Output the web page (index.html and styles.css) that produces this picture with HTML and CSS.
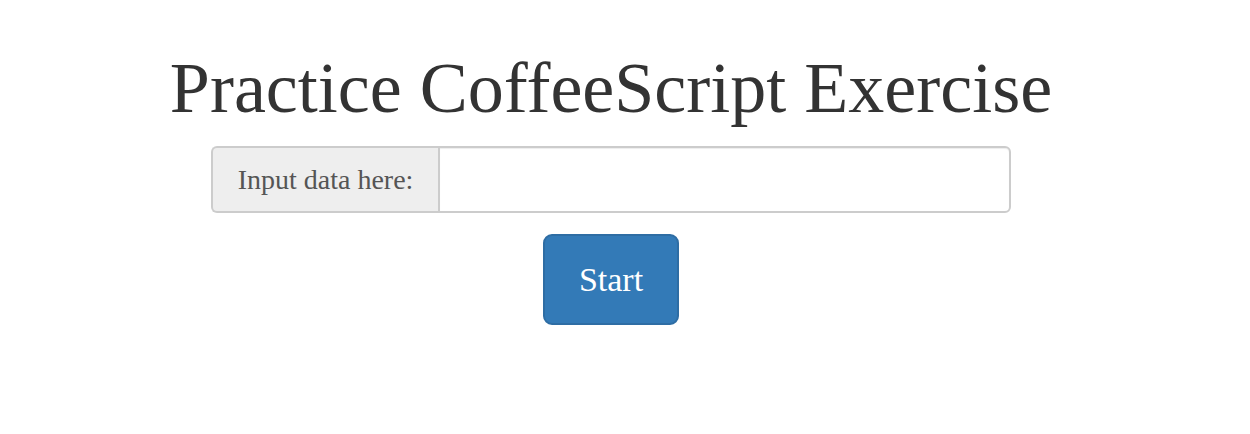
FILE: index.html
```html
<!DOCTYPE html>
<html>
<head>
<meta charset="utf-8">
<link rel="stylesheet" href="styles.css">
</head>
<body>
<div class="page">
  <h1 class="title">Practice CoffeeScript Exercise</h1>
  <div class="input-group">
    <span class="addon">Input data here:</span>
    <input class="field" type="text">
  </div>
  <button class="btn">Start</button>
</div>
</body>
</html>
```
FILE: styles.css
```css
html, body { margin: 0; padding: 0; background: #fff; }
body { font-family: "Liberation Serif", "Times New Roman", serif; color: #333; }
.page {
  width: 1222px;
  display: flex;
  flex-direction: column;
  align-items: center;
}
.title {
  margin: 48px 0 0;
  font-size: 72px;
  font-weight: normal;
  line-height: 80px;
  color: #333;
}
.input-group {
  margin-top: 18px;
  width: 800px;
  height: 67px;
  display: flex;
  box-sizing: border-box;
}
.addon {
  width: 227px;
  box-sizing: border-box;
  display: flex;
  align-items: center;
  justify-content: center;
  background: #eee;
  border: 2px solid #ccc;
  border-right: none;
  border-radius: 6px 0 0 6px;
  font-size: 28px;
  color: #555;
}
.field {
  flex: 1;
  box-sizing: border-box;
  border: 2px solid #ccc;
  border-radius: 0 6px 6px 0;
  background: #fff;
  outline: none;
  font-family: inherit;
  font-size: 26px;
  box-shadow: inset 0 1px 1px rgba(0,0,0,0.075);
}
.btn {
  margin-top: 21px;
  width: 136px;
  height: 91px;
  background: #337ab7;
  border: 2px solid #2e6da4;
  border-radius: 9px;
  color: #fff;
  font-family: inherit;
  font-size: 34px;
  padding: 0;
}
```
